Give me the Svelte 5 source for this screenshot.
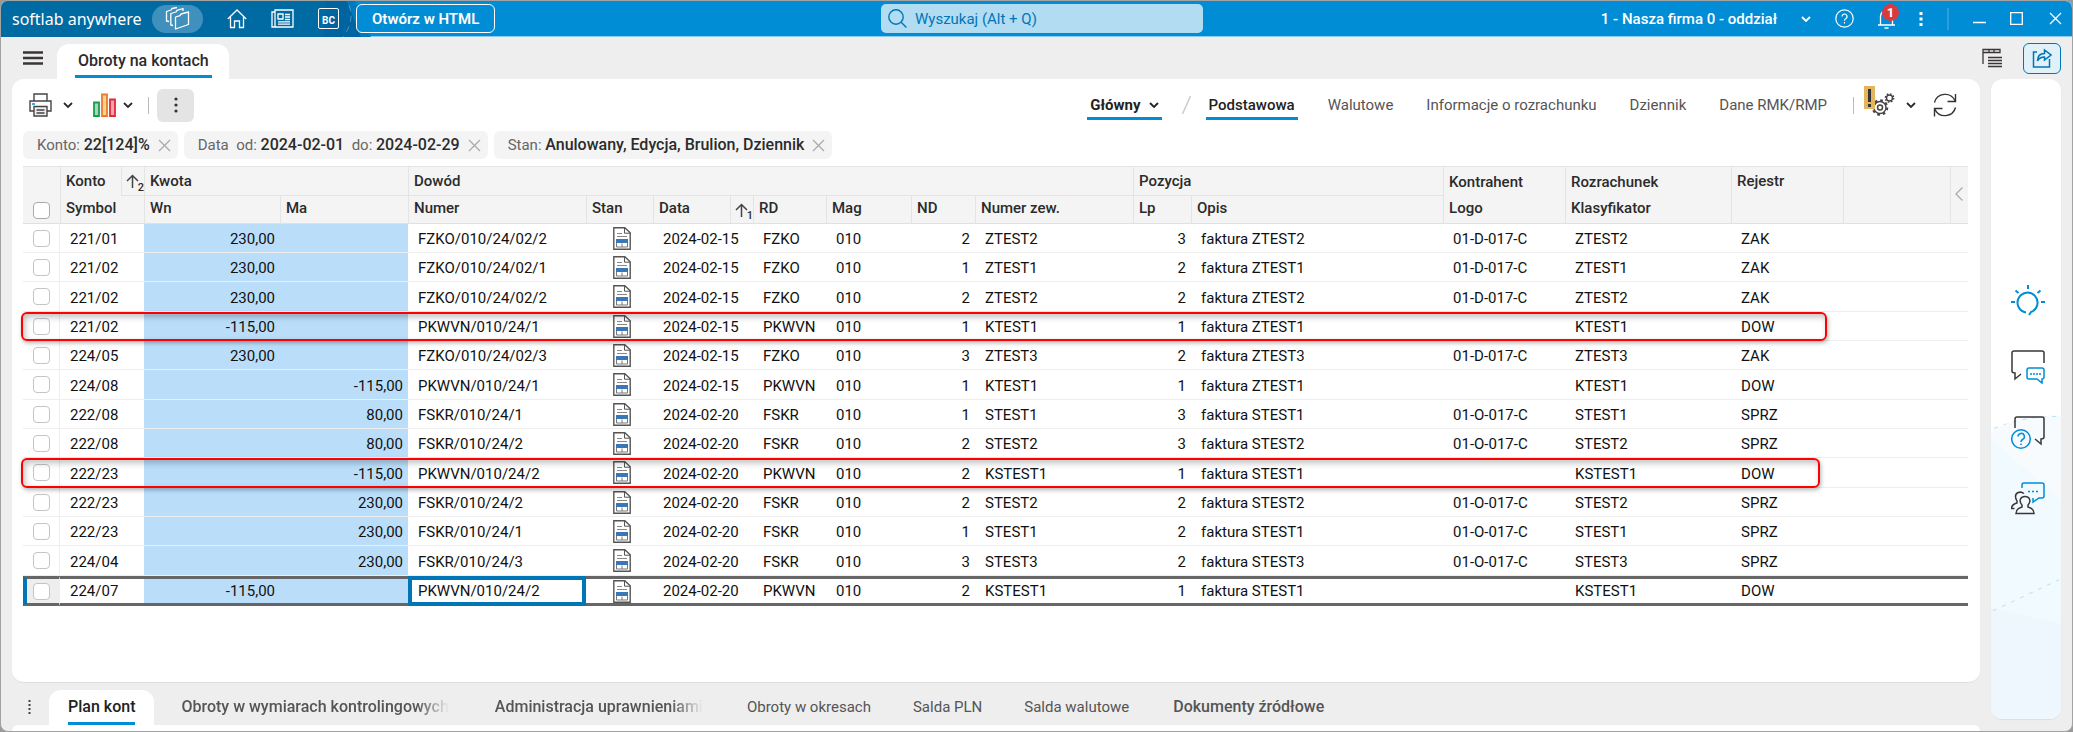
<script>
	const columns = [37, 84, 136, 128, 178, 67, 100, 73, 85, 64, 158, 58, 252, 122, 166, 112, 0, 18];

	const views = ['Podstawowa', 'Walutowe', 'Informacje o rozrachunku', 'Dziennik', 'Dane RMK/RMP'];

	const rows = [
		{ konto: '221/01', wn: '230,00', numer: 'FZKO/010/24/02/2', data: '2024-02-15', rd: 'FZKO', nd: 2, zew: 'ZTEST2', lp: 3, opis: 'faktura ZTEST2', logo: '01-D-017-C', klas: 'ZTEST2', rejestr: 'ZAK' },
		{ konto: '221/02', wn: '230,00', numer: 'FZKO/010/24/02/1', data: '2024-02-15', rd: 'FZKO', nd: 1, zew: 'ZTEST1', lp: 2, opis: 'faktura ZTEST1', logo: '01-D-017-C', klas: 'ZTEST1', rejestr: 'ZAK' },
		{ konto: '221/02', wn: '230,00', numer: 'FZKO/010/24/02/2', data: '2024-02-15', rd: 'FZKO', nd: 2, zew: 'ZTEST2', lp: 2, opis: 'faktura ZTEST2', logo: '01-D-017-C', klas: 'ZTEST2', rejestr: 'ZAK' },
		{ konto: '221/02', wn: '-115,00', numer: 'PKWVN/010/24/1', data: '2024-02-15', rd: 'PKWVN', nd: 1, zew: 'KTEST1', lp: 1, opis: 'faktura ZTEST1', klas: 'KTEST1', rejestr: 'DOW', marked: true },
		{ konto: '224/05', wn: '230,00', numer: 'FZKO/010/24/02/3', data: '2024-02-15', rd: 'FZKO', nd: 3, zew: 'ZTEST3', lp: 2, opis: 'faktura ZTEST3', logo: '01-D-017-C', klas: 'ZTEST3', rejestr: 'ZAK' },
		{ konto: '224/08', ma: '-115,00', numer: 'PKWVN/010/24/1', data: '2024-02-15', rd: 'PKWVN', nd: 1, zew: 'KTEST1', lp: 1, opis: 'faktura ZTEST1', klas: 'KTEST1', rejestr: 'DOW' },
		{ konto: '222/08', ma: '80,00', numer: 'FSKR/010/24/1', data: '2024-02-20', rd: 'FSKR', nd: 1, zew: 'STEST1', lp: 3, opis: 'faktura STEST1', logo: '01-O-017-C', klas: 'STEST1', rejestr: 'SPRZ' },
		{ konto: '222/08', ma: '80,00', numer: 'FSKR/010/24/2', data: '2024-02-20', rd: 'FSKR', nd: 2, zew: 'STEST2', lp: 3, opis: 'faktura STEST2', logo: '01-O-017-C', klas: 'STEST2', rejestr: 'SPRZ' },
		{ konto: '222/23', ma: '-115,00', numer: 'PKWVN/010/24/2', data: '2024-02-20', rd: 'PKWVN', nd: 2, zew: 'KSTEST1', lp: 1, opis: 'faktura STEST1', klas: 'KSTEST1', rejestr: 'DOW', marked: true },
		{ konto: '222/23', ma: '230,00', numer: 'FSKR/010/24/2', data: '2024-02-20', rd: 'FSKR', nd: 2, zew: 'STEST2', lp: 2, opis: 'faktura STEST2', logo: '01-O-017-C', klas: 'STEST2', rejestr: 'SPRZ' },
		{ konto: '222/23', ma: '230,00', numer: 'FSKR/010/24/1', data: '2024-02-20', rd: 'FSKR', nd: 1, zew: 'STEST1', lp: 2, opis: 'faktura STEST1', logo: '01-O-017-C', klas: 'STEST1', rejestr: 'SPRZ' },
		{ konto: '224/04', ma: '230,00', numer: 'FSKR/010/24/3', data: '2024-02-20', rd: 'FSKR', nd: 3, zew: 'STEST3', lp: 2, opis: 'faktura STEST3', logo: '01-O-017-C', klas: 'STEST3', rejestr: 'SPRZ' },
		{ konto: '224/07', wn: '-115,00', numer: 'PKWVN/010/24/2', data: '2024-02-20', rd: 'PKWVN', nd: 2, zew: 'KSTEST1', lp: 1, opis: 'faktura STEST1', klas: 'KSTEST1', rejestr: 'DOW' }
	];

	let view = $state('Podstawowa');
	let active = $state(12);
</script>

{#snippet chevron()}
	<svg width="10" height="10" viewBox="0 0 10 10" fill="none" stroke="currentColor" stroke-width="1.800"><path d="M1 3l4 4 4-4" /></svg>
{/snippet}

{#snippet cross()}
	<svg width="13" height="13" viewBox="0 0 13 13" fill="none" stroke="#aaa" stroke-width="1.300"><path d="M1 1l11 11M12 1L1 12" /></svg>
{/snippet}

{#snippet sortArrow(n)}
	<span class="sort">
		<svg width="13" height="14" viewBox="0 0 13 14" fill="none" stroke="#444" stroke-width="1.500"><path d="M6.500 14V1.500M1 7l5.500-5.500L12 7" /></svg>
		<small>{n}</small>
	</span>
{/snippet}

{#snippet docIcon()}
	<svg class="doc" width="18" height="23" viewBox="0 0 18 23" fill="none">
		<path d="M.8.8h11l5.400 5v16.400H.8z" stroke="#555" stroke-width="1.400" fill="#fff" />
		<path d="M11.500 1v5.200H17" stroke="#555" />
		<path d="M4 6.500h5M4 9.500h10" stroke="#888" />
		<path d="M3.500 16v4h11v-4M9 13.500V20" stroke="#777" />
		<path d="M3 12h12v4H3z" fill="#3a76b8" />
		<path d="M4 16.500h4.500M9.500 16.500H14" stroke="#fff" />
	</svg>
{/snippet}

<div class="window">
	<header class="topbar">
		<svg class="topbar__art" width="460" height="36" viewBox="0 0 460 36" aria-hidden="true">
			<path d="M0 0h346l14 36H0z" fill="#006ba3" />
			<path d="M324 0h22l14 36h-37z" fill="#0064a0" />
			<path d="M346 0h8l16 36h-10z" fill="#0079bd" />
			<path d="M348 4q6 16-6 32M398 4l6 30" stroke="#8cc4e6" stroke-dasharray="6 5" fill="none" opacity=".5" />
		</svg>
		<div class="topbar__left">
			<span class="logo">softlab anywhere</span>
			<button class="pill" aria-label="Okna">
				<svg width="25" height="24" viewBox="0 0 25 24" fill="none" stroke="#fff" stroke-width="1.300" stroke-linejoin="round">
					<path d="M10.500 10l4.500-1.300 1-1.700 7.500-2v12.500L10.500 22z" />
					<path d="M8 18.500L5.800 18V6.500L11 5l1-1.700L18 1.500V4" />
					<path d="M4 14.500L1.500 14V4.500L6 3l1-1.500 5-1" />
				</svg>
			</button>
			<button class="tool home" aria-label="Start">
				<svg width="20" height="20" viewBox="0 0 20 20" fill="none" stroke="#fff" stroke-width="1.300"><path d="M.8 10L10 1l9.200 9M3.500 8v10.500h4V12h5v6.500h4V8" /></svg>
			</button>
			<button class="tool news" aria-label="Aktualności">
				<svg width="23" height="19" viewBox="0 0 23 19" fill="none" stroke="#fff" stroke-width="1.300">
					<path d="M4 1h18v17H1V3h3zM4 3v15" />
					<path d="M7 5h5v5H7zM14 5.500h5M14 8h5M14 10.500h5M7 12.800h12M7 15.200h12" />
				</svg>
			</button>
			<button class="tool bc">BC</button>
			<button class="open">Otwórz w HTML</button>
		</div>
		<label class="search">
			<svg width="19" height="19" viewBox="0 0 19 19" fill="none" stroke="#0076b6" stroke-width="1.400"><circle cx="8" cy="8" r="7.200" /><path d="M13.200 13.200l5.200 5.200" /></svg>
			<input type="text" placeholder="Wyszukaj (Alt + Q)" aria-label="Wyszukaj" />
		</label>
		<div class="topbar__right">
			<button class="firm">1 - Nasza firma 0 - oddział {@render chevron()}</button>
			<button class="tool" aria-label="Pomoc">
				<svg width="19" height="19" viewBox="0 0 19 19" fill="none" stroke="#fff" stroke-width="1.200"><circle cx="9.500" cy="9.500" r="8.700" /><path d="M7 7.500a2.500 2.500 0 1 1 3.700 2.200c-.9.500-1.200 1-1.200 2M9.500 13v1.500" /></svg>
			</button>
			<button class="tool bell" aria-label="Powiadomienia">
				<svg width="17" height="20" viewBox="0 0 17 20" fill="none" stroke="#fff" stroke-width="1.300"><path d="M0 16h17M2.500 16V7.500a6 6 0 0 1 12 0V16M6.500 19h4" /></svg>
				<span class="badge">1</span>
			</button>
			<button class="tool" aria-label="Więcej">
				<svg width="4" height="16" viewBox="0 0 4 16" fill="#fff"><path d="M.5 1h3v3h-3zM.5 6.500h3v3h-3zM.5 12h3v3h-3z" /></svg>
			</button>
			<span class="topbar__sep"></span>
			<button class="tool" aria-label="Minimalizuj">
				<svg width="13" height="13" viewBox="0 0 13 13" stroke="#fff" stroke-width="1.300"><path d="M0 10.500h13" /></svg>
			</button>
			<button class="tool" aria-label="Maksymalizuj">
				<svg width="13" height="13" viewBox="0 0 13 13" fill="none" stroke="#fff" stroke-width="1.300"><path d="M.7.7h11.600v11.600H.7z" /></svg>
			</button>
			<button class="tool close" aria-label="Zamknij">
				<svg width="13" height="13" viewBox="0 0 13 13" stroke="#fff" stroke-width="1.300"><path d="M1 1l11 11M12 1L1 12" /></svg>
			</button>
		</div>
	</header>

	<nav class="tabs">
		<button class="tool" aria-label="Menu">
			<svg width="20" height="14" viewBox="0 0 20 14" stroke="#3a3637" stroke-width="2.500"><path d="M0 1.500h20M0 7h20M0 12.500h20" /></svg>
		</button>
		<button class="tab tab--top"><span>Obroty na kontach</span></button>
		<button class="tool tabs__list" aria-label="Lista">
			<svg width="21" height="20" viewBox="0 0 21 20" fill="none" stroke="#3a3637" stroke-width="1.300">
				<path d="M1 16V1.500h17v3H1M7 2v3M12 2v3" />
				<path d="M6 9.500h14M6 12.500h14M6 15.500h14M6 18.500h14" stroke-width="1.500" />
			</svg>
		</button>
		<button class="share" aria-label="Udostępnij">
			<svg width="20" height="20" viewBox="0 0 20 20" fill="none" stroke="#0076b6" stroke-width="1.500">
				<path d="M5 4H1.500v15h16v-8" />
				<path d="M5.500 13c0-5 2.500-7.500 7-7.500V2l6.500 5-6.500 5V9c-3.500 0-5.500 1-7 4z" />
			</svg>
		</button>
	</nav>

	<div class="body">
		<main>
			<section class="card">
				<div class="toolbar">
					<button class="tool print" aria-label="Drukuj">
						<svg width="23" height="24" viewBox="0 0 23 24" fill="none" stroke="#444" stroke-width="1.400">
							<path d="M5 8V1h13v7M5 18H1V8h21v10h-4" />
							<path d="M5 13.500h13V23H5z" fill="#eee" /><path d="M7.500 17h8M7.500 20h8" />
							<path d="M3 11h3" stroke="#008dd5" />
						</svg>
						{@render chevron()}
					</button>
					<button class="tool chart" aria-label="Wykres">
						<svg width="23" height="24" viewBox="0 0 23 24" stroke-width="1.800">
							<path d="M1 9.500h5V23H1z" fill="#a5d9b5" stroke="#1a9c50" />
							<path d="M9 1.500h5V23H9z" fill="#ffd28a" stroke="#ea7a2e" />
							<path d="M17 6.500h5V23h-5z" fill="#f6a6ac" stroke="#e02a35" />
						</svg>
						{@render chevron()}
					</button>
					<span class="toolbar__sep"></span>
					<button class="more" aria-label="Więcej">
						<svg width="4" height="16" viewBox="0 0 4 16" fill="#333"><circle cx="2" cy="2" r="1.600" /><circle cx="2" cy="8" r="1.600" /><circle cx="2" cy="14" r="1.600" /></svg>
					</button>
					<div class="views">
						<button class="view view--main">Główny {@render chevron()}</button>
						<span class="slash"><svg width="9" height="18" viewBox="0 0 9 18" stroke="#ccc" stroke-width="1.500"><path d="M8.500 0L.5 18" /></svg></span>
						{#each views as name}
							<button class="view" class:view--active={view === name} onclick={() => (view = name)}>{name}</button>
						{/each}
					</div>
					<span class="toolbar__sep"></span>
					<button class="tool gears" aria-label="Ustawienia">
						<svg width="31" height="38" viewBox="0 0 31 38" fill="none" stroke="#444">
							<circle cx="16" cy="21.500" r="6" stroke-width="1.400" />
							<circle cx="16" cy="21.500" r="7.300" stroke-width="2" stroke-dasharray="2.700 3.030" />
							<circle cx="16" cy="21.500" r="2.500" stroke-width="1.500" />
							<circle cx="25.500" cy="12" r="3" stroke-width="1.400" />
							<circle cx="25.500" cy="12" r="4.200" stroke-width="1.400" stroke-dasharray="1.600 1.700" />
							<path d="M0 0h11v23H0z" fill="#e3b55c" stroke="none" />
							<path d="M5.500 3v13M5.500 18v3" stroke="#333" stroke-width="3" />
						</svg>
						{@render chevron()}
					</button>
					<button class="tool" aria-label="Odśwież">
						<svg width="24" height="24" viewBox="0 0 24 24" fill="none" stroke="#333" stroke-width="1.400">
							<path d="M1.500 9.500a11 11 0 0 1 20.500-2M22.500 1v7.500h-8M22.500 14.500a11 11 0 0 1-20.500 2M1.500 23.500v-8h8" />
						</svg>
					</button>
				</div>

				<div class="filters">
					<button class="chip"><span>Konto: <b>22[124]%</b></span>{@render cross()}</button>
					<button class="chip"><span>Data&nbsp; od: <b>2024-02-01</b>&nbsp; do: <b>2024-02-29</b></span>{@render cross()}</button>
					<button class="chip"><span>Stan: <b>Anulowany, Edycja, Brulion, Dziennik</b></span>{@render cross()}</button>
				</div>

				<table>
					<colgroup>
						{#each columns as w}
							<col style={w ? `width: ${w}px` : ''} />
						{/each}
					</colgroup>
					<thead>
						<tr>
							<th rowspan="2" class="check"><input type="checkbox" aria-label="Zaznacz wszystko" /></th>
							<th class="open-end"><div class="head">Konto {@render sortArrow(2)}</div></th>
							<th colspan="2" class="group">Kwota</th>
							<th colspan="7" class="group">Dowód</th>
							<th colspan="2" class="group">Pozycja</th>
							<th>Kontrahent</th>
							<th>Rozrachunek</th>
							<th rowspan="2" class="tall">Rejestr</th>
							<th rowspan="2"></th>
							<th rowspan="2" class="collapse">
								<svg width="8" height="14" viewBox="0 0 8 14" fill="none" stroke="#aaa" stroke-width="1.300"><path d="M7.500.5L1 7l6.500 6.500" /></svg>
							</th>
						</tr>
						<tr>
							<th>Symbol</th>
							<th>Wn</th>
							<th>Ma</th>
							<th>Numer</th>
							<th>Stan</th>
							<th class="sorted"><div class="head">Data {@render sortArrow(1)}</div></th>
							<th>RD</th>
							<th>Mag</th>
							<th>ND</th>
							<th>Numer zew.</th>
							<th>Lp</th>
							<th>Opis</th>
							<th>Logo</th>
							<th>Klasyfikator</th>
						</tr>
					</thead>
					<tbody>
						{#each rows as row, i}
							<tr class:active={active === i} onclick={() => (active = i)}>
								<td class="check">
									<input type="checkbox" aria-label={row.konto} />
									{#if row.marked}<span class="mark"></span>{/if}
								</td>
								<td>{row.konto}</td>
								<td class="sum">{row.wn ?? ''}</td>
								<td class="sum">{row.ma ?? ''}</td>
								<td class="numer">{row.numer}</td>
								<td class="stan">{@render docIcon()}</td>
								<td>{row.data}</td>
								<td>{row.rd}</td>
								<td>010</td>
								<td class="num">{row.nd}</td>
								<td>{row.zew}</td>
								<td class="num">{row.lp}</td>
								<td>{row.opis}</td>
								<td>{row.logo ?? ''}</td>
								<td>{row.klas}</td>
								<td>{row.rejestr}</td>
								<td colspan="2"></td>
							</tr>
						{/each}
					</tbody>
				</table>
			</section>

			<nav class="bottom">
				<button class="tool" aria-label="Więcej">
					<svg width="3" height="14" viewBox="0 0 3 14" fill="#444"><path d="M.5 0h2v2h-2zM.5 4h2v2h-2zM.5 8h2v2h-2zM.5 12h2v2h-2z" /></svg>
				</button>
				<button class="tab tab--bottom"><span>Plan kont</span></button>
				<button class="link link--bold"><span class="fade">Obroty w wymiarach kontrolingowych</span></button>
				<button class="link link--bold"><span class="fade">Administracja uprawnieniami</span></button>
				<button class="link">Obroty w okresach</button>
				<button class="link">Salda PLN</button>
				<button class="link">Salda walutowe</button>
				<button class="link link--bold">Dokumenty źródłowe</button>
			</nav>
			<div class="strip"></div>
		</main>

		<aside>
			<svg class="aside__art" viewBox="0 0 70 639" preserveAspectRatio="none" aria-hidden="true">
				<path d="M0 352Q30 334 70 336V639H0z" fill="#f7fbfe" />
				<path d="M0 359l70 62v218H0z" fill="#f1fafe" />
				<path d="M0 528l70 16v95H0z" fill="#eef6fe" />
				<path d="M3 349q30-13 67-12M2 531l66-31" fill="none" stroke="#bfe0f5" stroke-dasharray="4 6" />
			</svg>
			<button class="tool" aria-label="Wskazówki">
				<svg width="34" height="34" viewBox="0 0 34 34" fill="none" stroke="#008dd5" stroke-width="2">
					<path d="M15 28.500A10 10 0 1 1 20 28l-2 3" />
					<path d="M17 1v4M0 18h4M30 18h4M4.500 6.500L7.500 9M29.500 6.500L26.500 9" />
				</svg>
			</button>
			<button class="tool" aria-label="Czat">
				<svg width="34" height="34" viewBox="0 0 34 34" fill="none" stroke="#3a3637" stroke-width="1.500">
					<path d="M33 13V3q0-2-2-2H3Q1 1 1 3v18q0 2 3 2v6l6-5" />
					<path d="M18 18h13q2 0 2 2v7q0 2-2 2v4l-5-4h-8q-2 0-2-2v-7q0-2 2-2z" stroke="#008dd5" />
					<path d="M19 24h11" stroke="#008dd5" stroke-dasharray="2 1" />
				</svg>
			</button>
			<button class="tool" aria-label="Pomoc">
				<svg width="34" height="34" viewBox="0 0 34 34" fill="none" stroke="#3a3637" stroke-width="1.500">
					<path d="M4 12V3q0-2 2-2h25q2 0 2 2v18q0 2-3 2v5l-6-5" />
					<g stroke="#008dd5"><circle cx="10" cy="23" r="9.300" /><path d="M7 20.500a3.200 3.200 0 1 1 4.500 3c-1.200.6-1.500 1.200-1.500 2.500M10 27.500V29" /></g>
				</svg>
			</button>
			<button class="tool" aria-label="Społeczność">
				<svg width="34" height="34" viewBox="0 0 34 34" fill="none" stroke="#3a3637" stroke-width="1.500">
					<path d="M11 6V3q0-2 2-2h18q2 0 2 2v11q0 2-2 2h-3l-6 4v-4" stroke="#008dd5" />
					<path d="M17 9.500h11" stroke="#008dd5" stroke-dasharray="2 2" />
					<path d="M5 31.500c0-4 2-5.500 6-6.500v-2c-3-3-2.500-8.500 3-8.500s6 5.500 3 8.500v2c4 1 6 2.500 6 6.500z" />
					<path d="M13 11.500C9 8.500 4.500 11 4.500 14.500c0 2 1 3.500 1.500 4.500v2c-3.500 1-5.500 2.500-5.500 5.500h3" />
				</svg>
			</button>
		</aside>
	</div>
</div>

<style>
	:global(body) {
		background: #9a9a9a;
	}

	.window {
		box-sizing: border-box;
		min-height: 100vh;
		display: flex;
		flex-direction: column;
		border: 1px solid #a3a3a3;
		border-radius: 8px;
		background: #eee;
		font-family: Roboto, sans-serif;
		font-size: 15px;
		line-height: 20px;
		color: #2b2b2b;
		overflow: hidden;
	}

	button {
		font: inherit;
		color: inherit;
		background: none;
		border: 0;
		padding: 0;
		white-space: nowrap;
		cursor: pointer;
	}

	svg {
		display: block;
		flex: none;
	}

	.tool {
		display: flex;
		align-items: center;
	}

	.topbar {
		position: relative;
		display: grid;
		grid-template-columns: 1fr 322px 1fr;
		align-items: center;
		height: 36px;
		box-sizing: border-box;
		padding-left: 11px;
		background: #008dd5;
		border-bottom: 1px solid #8acbee;
		color: #fff;
	}

	.topbar__art {
		position: absolute;
		left: 0;
		top: 0;
	}

	.topbar__left,
	.topbar__right {
		position: relative;
		display: flex;
		align-items: center;
	}

	.topbar__right {
		justify-content: flex-end;
		padding-right: 10px;
		gap: 24px;
	}

	.logo {
		width: 140px;
		font-family: "Noto Sans", sans-serif;
		font-size: 16px;
		white-space: nowrap;
	}

	.pill {
		display: flex;
		align-items: center;
		justify-content: center;
		width: 51px;
		height: 28px;
		border-radius: 14px;
		background: #4090bd;
	}

	.home,
	.news,
	.bc {
		margin-left: 24px;
	}

	.bc {
		box-sizing: border-box;
		width: 21px;
		height: 21px;
		border: 1px solid #fff;
		border-radius: 2px;
		justify-content: center;
		align-items: flex-end;
		font-size: 10px;
		line-height: 14px;
		font-weight: 700;
	}

	.open {
		margin-left: 17px;
		height: 29px;
		padding: 0 15px;
		border: 1px solid #fff;
		border-radius: 6px;
		background: #008dd5;
		font-weight: 600;
	}

	.search {
		display: flex;
		align-items: center;
		gap: 8px;
		height: 29px;
		padding: 0 7px;
		border-radius: 5px;
		background: #b2dcf2;
	}

	.search input {
		flex: 1;
		min-width: 0;
		border: 0;
		padding: 0;
		background: none;
		font: inherit;
		color: #0076b6;
	}

	.search input::placeholder {
		color: #0076b6;
		opacity: 1;
	}

	.firm {
		display: flex;
		align-items: center;
		gap: 24px;
		font-weight: 500;
	}

	.bell {
		position: relative;
	}

	.close {
		margin-left: 2px;
	}

	.badge {
		position: absolute;
		left: 4px;
		top: -5px;
		width: 17px;
		height: 17px;
		border-radius: 50%;
		background: #d93a40;
		font-size: 13px;
		line-height: 17px;
		font-weight: 700;
		text-align: center;
	}

	.topbar__sep {
		width: 2px;
		height: 22px;
		background: #2a9fdc;
	}

	.tabs {
		display: flex;
		align-items: center;
		height: 42px;
		padding: 0 11px 0 22px;
	}

	.tab {
		box-sizing: border-box;
		background: #fff;
		border-radius: 12px 12px 0 0;
		font-weight: 500;
	}

	.tab span {
		display: block;
		height: 100%;
		box-sizing: border-box;
		border-bottom: 3px solid #008dd5;
	}

	.tab--top {
		align-self: flex-end;
		height: 35px;
		margin-left: 14px;
		padding: 0 17px 1px 18px;
		font-size: 16px;
	}

	.tab--top span {
		padding: 7px 3px 0;
	}

	.tabs__list {
		margin-left: auto;
		margin-right: 20px;
	}

	.share {
		display: flex;
		align-items: center;
		justify-content: center;
		box-sizing: border-box;
		width: 38px;
		height: 31px;
		border: 1px solid #0076b6;
		border-radius: 6px;
		background: #e0f1fa;
	}

	.body {
		flex: 1;
		display: flex;
		gap: 11px;
		padding: 0 11px;
	}

	main {
		flex: 1;
		min-width: 0;
		display: flex;
		flex-direction: column;
	}

	.card {
		flex: 1;
		padding: 0 12px 0 11px;
		border-radius: 12px;
		background: #fff;
		border-bottom: 1px solid #ddd;
	}

	.toolbar {
		display: flex;
		align-items: center;
		height: 52px;
		padding: 0 11px 0 6px;
	}

	.print,
	.chart {
		gap: 11px;
		margin-right: 20px;
	}

	.chart {
		gap: 7px;
		margin-right: 15px;
	}

	.toolbar__sep {
		width: 1px;
		height: 17px;
		background: #bbb;
	}

	.more {
		display: flex;
		align-items: center;
		justify-content: center;
		width: 37px;
		height: 33px;
		margin-left: 8px;
		border-radius: 6px;
		background: #e4e4e4;
	}

	.views {
		flex: 1;
		display: flex;
		align-items: center;
		justify-content: flex-end;
		margin-right: 23px;
		color: #555;
	}

	.view {
		height: 30px;
		margin-left: 27px;
		padding: 0 3px;
		border-top: 3px solid transparent;
		border-bottom: 3px solid transparent;
	}

	.view--active,
	.view--main {
		font-weight: 500;
		color: #222;
		border-bottom-color: #008dd5;
	}

	.view--main {
		display: flex;
		align-items: center;
		gap: 8px;
		font-weight: 700;
	}

	.slash {
		margin-left: 20px;
		margin-right: -12px;
	}

	.gears {
		gap: 11px;
		margin: 0 17px 0 10px;
	}

	.filters {
		display: flex;
		gap: 6px;
		height: 28px;
		margin-bottom: 7px;
	}

	.chip {
		display: flex;
		align-items: center;
		gap: 8px;
		padding: 0 7px 0 14px;
		border-radius: 6px;
		background: #f4f4f4;
		color: #666;
	}

	.chip b {
		font-size: 16px;
		font-weight: 500;
		color: #2b2b2b;
	}

	table {
		width: 100%;
		table-layout: fixed;
		border-collapse: separate;
		border-spacing: 0;
	}

	th {
		box-sizing: border-box;
		height: 28px;
		padding: 0 0 3px 5px;
		border-left: 1px solid #e4e4e4;
		background: #f4f4f4;
		font-weight: 500;
		text-align: left;
		white-space: nowrap;
	}

	thead tr:first-child th {
		height: 30px;
		border-top: 1px solid #e4e4e4;
	}

	thead tr:first-child th:not([rowspan]) {
		padding-bottom: 0;
	}

	thead tr:last-child th,
	th[rowspan] {
		border-bottom: 1px solid #e0e0e0;
	}

	thead .group {
		border-bottom: 1px solid #e4e4e4;
	}

	th.check {
		border-left: 0;
		vertical-align: bottom;
		padding-bottom: 4px;
	}

	th.tall {
		vertical-align: top;
		padding-top: 4px;
	}

	th.collapse {
		padding-left: 4px;
	}

	th.sorted {
		padding-bottom: 0;
	}

	.head {
		display: flex;
		justify-content: space-between;
		height: 27px;
		line-height: 24px;
	}

	.open-end .head {
		height: 29px;
		line-height: 28px;
	}

	.sort {
		position: relative;
		display: flex;
		align-items: center;
		width: 23px;
		box-sizing: border-box;
		padding-left: 4px;
		border-left: 1px solid #e4e4e4;
	}

	.open-end .sort {
		border-bottom: 1px solid #e4e4e4;
	}

	.sort small {
		position: absolute;
		right: 0;
		bottom: 1px;
		font-size: 11px;
		line-height: 12px;
	}

	tbody tr {
		position: relative;
		height: 29px;
	}

	tbody tr:nth-child(3n) {
		height: 30px;
	}

	td {
		box-sizing: border-box;
		padding: 2px 0 0 10px;
		border-bottom: 1px solid #eee;
		color: #111;
		white-space: nowrap;
	}

	td.check {
		padding-top: 0;
		border-right: 1px solid #eee;
	}

	.check input {
		appearance: none;
		display: block;
		box-sizing: border-box;
		width: 17px;
		height: 17px;
		margin: 0;
		border: 1px solid #c4c4c4;
		border-radius: 4px;
		background: #fff;
	}

	.check input:checked {
		background: #0076b6;
	}

	th.check input {
		margin-left: 5px;
		border-color: #aaa;
	}

	.sum,
	.num {
		padding: 2px 5px 0;
		text-align: right;
	}

	.sum {
		background: #badefa;
	}

	td.stan {
		padding: 0 6px 0 10px;
	}

	.stan svg {
		margin: 0 auto;
	}

	.mark {
		position: absolute;
		z-index: 1;
		inset: 0 141px 0 -2px;
		border: 2px solid #f00;
		border-radius: 6px;
		box-shadow: 1px 2px 4px rgba(0, 0, 0, 0.3), inset 2px 3px 6px rgba(0, 0, 0, 0.25);
		pointer-events: none;
	}

	tbody tr:nth-child(9) .mark {
		right: 148px;
	}

	tbody tr.active {
		height: 30px;
	}

	.active td {
		padding-top: 0;
		border-top: 3px solid #666;
		border-bottom: 3px solid #666;
	}

	.active .check {
		padding-left: 6px;
		border-left: 4px solid #0076b6;
		background: #eee;
	}

	.active .numer {
		padding-left: 6px;
		border: 4px solid #0076b6;
	}

	.bottom {
		display: flex;
		align-items: flex-end;
		height: 42px;
		padding-left: 16px;
		color: #555;
	}

	.bottom .tool {
		height: 36px;
		margin-right: 18px;
	}

	.tab--bottom {
		height: 35px;
		margin-right: 4px;
		padding: 0 19px;
		color: #222;
		font-size: 16px;
	}

	.tab--bottom span {
		padding-top: 7px;
	}

	.link {
		height: 36px;
		padding: 0 21px;
	}

	.link--bold {
		padding: 0 23px;
		font-size: 16px;
		font-weight: 500;
	}

	.fade {
		display: block;
		overflow: hidden;
		-webkit-mask-image: linear-gradient(to left, transparent, #000 32px);
		mask-image: linear-gradient(to left, transparent, #000 32px);
	}

	.strip {
		height: 6px;
		border-radius: 8px 8px 0 0;
		background: #fff;
	}

	aside {
		position: relative;
		width: 70px;
		box-sizing: border-box;
		display: flex;
		flex-direction: column;
		align-items: center;
		gap: 32px;
		margin-bottom: 12px;
		padding: 205px 0 0 4px;
		border-radius: 12px;
		background: #fff;
		box-shadow: 0 1px 1px #ddd;
		overflow: hidden;
	}

	aside .tool {
		position: relative;
	}

	.aside__art {
		position: absolute;
		inset: 0;
		width: 100%;
		height: 100%;
	}
</style>
